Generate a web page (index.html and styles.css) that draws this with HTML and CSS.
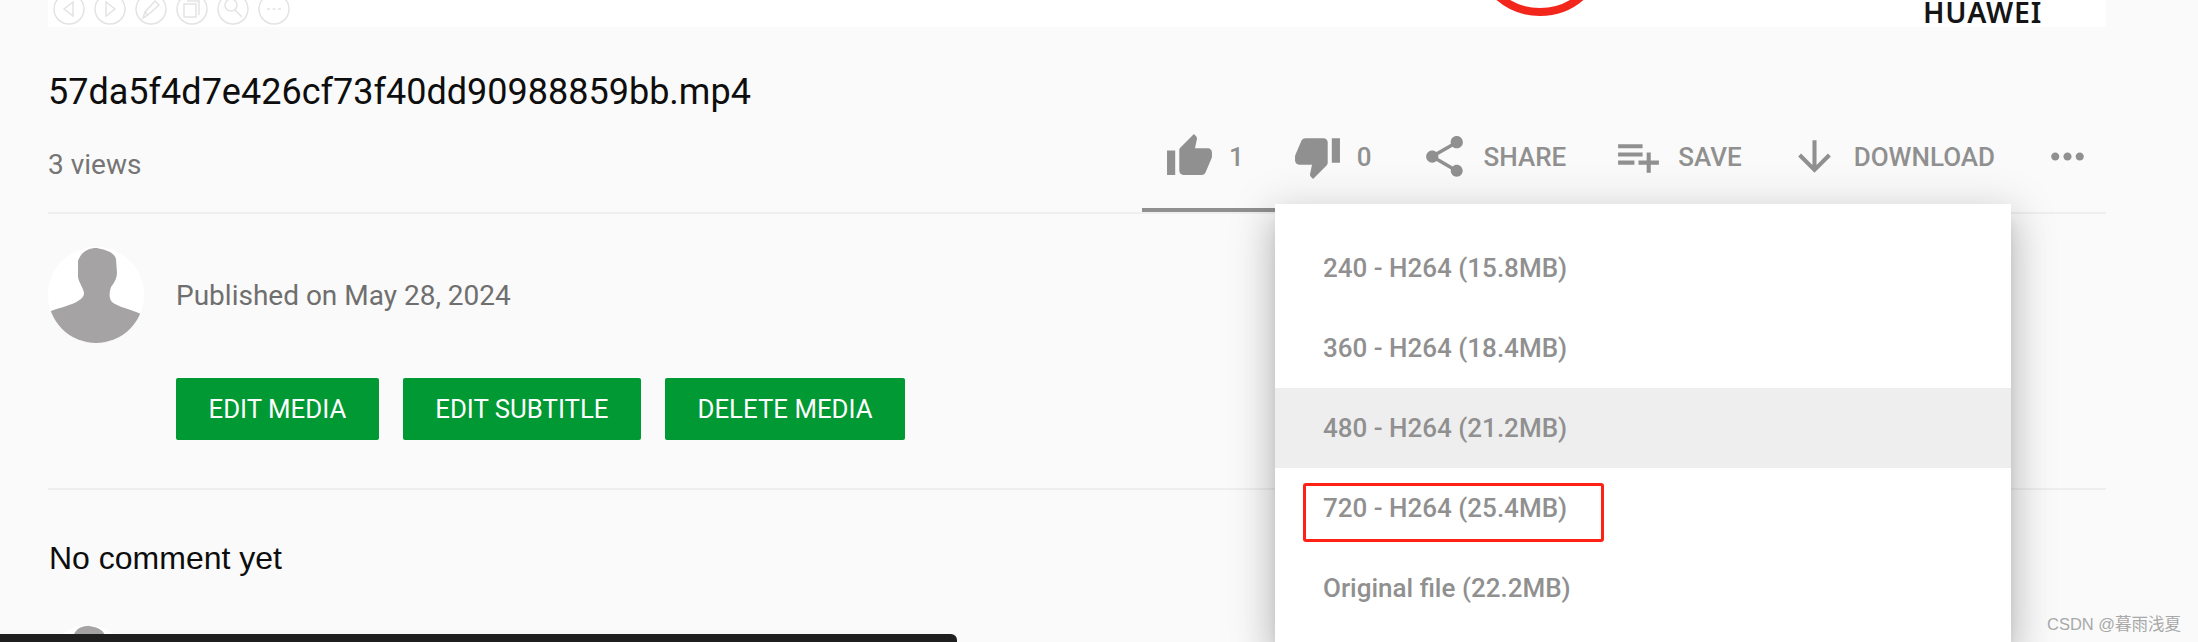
FILE: index.html
```html
<!DOCTYPE html>
<html lang="en">
<head>
<meta charset="utf-8">
<title>57da5f4d7e426cf73f40dd90988859bb.mp4</title>
<link rel="stylesheet" href="styles.css">
</head>
<body>
<main class="page">
  <div class="player-strip">
    <div class="tools">
      <svg class="tool" viewBox="0 0 32 32"><circle cx="16" cy="16" r="15"/><path d="M20 9l-9 7 9 7z"/></svg>
      <svg class="tool" viewBox="0 0 32 32"><circle cx="16" cy="16" r="15"/><path d="M12 9l9 7-9 7z"/></svg>
      <svg class="tool" viewBox="0 0 32 32"><circle cx="16" cy="16" r="15"/><path d="M8 25l2-6L20 8l4 4-11 10zM10 19l3 3"/></svg>
      <svg class="tool" viewBox="0 0 32 32"><circle cx="16" cy="16" r="15"/><path d="M11 8h12v14M8 11h12v13H8z"/></svg>
      <svg class="tool" viewBox="0 0 32 32"><circle cx="16" cy="16" r="15"/><circle cx="14" cy="12" r="6"/><path d="M18 17l7 7"/></svg>
      <svg class="tool" viewBox="0 0 32 32"><circle cx="16" cy="16" r="15"/><path d="M9 16h3M14.500 16h3M20 16h3"/></svg>
    </div>
    <div class="brand-arc"></div>
    <div class="brand-name">HUAWEI</div>
  </div>

  <section class="media-info">
    <h1 class="media-title">57da5f4d7e426cf73f40dd90988859bb.mp4</h1>
    <div class="media-stats">
      <span class="views">3 views</span>
      <div class="actions">
        <div class="rating">
          <button class="action">
            <svg class="icon" viewBox="0 0 24 24"><path d="M1 21h4V9H1v12zm22-11c0-1.100-.9-2-2-2h-6.310l.95-4.570.03-.32c0-.41-.17-.79-.44-1.060L14.170 1 7.590 7.590C7.220 7.950 7 8.450 7 9v10c0 1.100.9 2 2 2h9c.83 0 1.540-.5 1.840-1.220l3.020-7.050c.09-.23.14-.47.14-.73v-2z"/></svg>
            <span>1</span>
          </button>
          <button class="action">
            <svg class="icon" viewBox="0 0 24 24"><path d="M15 3H6c-.83 0-1.540.5-1.840 1.220l-3.020 7.050c-.09.23-.14.47-.14.73v2c0 1.100.9 2 2 2h6.310l-.95 4.570-.03.32c0 .41.17.79.44 1.060L9.830 23l6.590-6.590c.36-.36.58-.86.58-1.410V5c0-1.100-.9-2-2-2zm4 0v12h4V3h-4z"/></svg>
            <span>0</span>
          </button>
        </div>
        <button class="action">
          <svg class="icon" viewBox="0 0 24 24"><path d="M18 16.080c-.76 0-1.440.3-1.960.77L8.910 12.700c.05-.23.09-.46.09-.7s-.04-.47-.09-.7l7.050-4.110c.54.5 1.250.81 2.040.81 1.660 0 3-1.340 3-3s-1.340-3-3-3-3 1.340-3 3c0 .24.04.47.09.7L8.040 9.810C7.500 9.310 6.790 9 6 9c-1.660 0-3 1.340-3 3s1.340 3 3 3c.79 0 1.500-.31 2.040-.81l7.120 4.160c-.05.21-.08.43-.08.65 0 1.610 1.310 2.920 2.920 2.920 1.610 0 2.920-1.310 2.920-2.920s-1.310-2.920-2.920-2.920z"/></svg>
          <span>SHARE</span>
        </button>
        <button class="action">
          <svg class="icon" viewBox="0 0 24 24"><path d="M14 10H2v2h12v-2zm0-4H2v2h12V6zm4 8v-4h-2v4h-4v2h4v4h2v-4h4v-2h-4zM2 16h8v-2H2v2z"/></svg>
          <span>SAVE</span>
        </button>
        <button class="action">
          <svg class="icon" viewBox="0 0 24 24"><path d="M20 12l-1.410-1.410L13 16.170V4h-2v12.170l-5.580-5.590L4 12l8 8 8-8z"/></svg>
          <span>DOWNLOAD</span>
        </button>
        <button class="action">
          <svg class="icon" viewBox="0 0 24 24"><path d="M6 10c-1.100 0-2 .9-2 2s.9 2 2 2 2-.9 2-2-.9-2-2-2zm12 0c-1.100 0-2 .9-2 2s.9 2 2 2 2-.9 2-2-.9-2-2-2zm-6 0c-1.100 0-2 .9-2 2s.9 2 2 2 2-.9 2-2-.9-2-2-2z"/></svg>
        </button>
      </div>
    </div>
  </section>

  <section class="author">
    <div class="author-row">
      <svg class="avatar" viewBox="0 0 96 96"><path d="M49 1C40 1 33 5 30 14V30C31 36 35 40 36 46 36 50 33 52 30 54 24 58 14 60 3 64V96H93V67C82 62 70 60 64 55 61 52 61 46 63 40 67 35 69 30 69 26L68 12C66 5 58 3 49 1Z"/></svg>
      <span class="published">Published on May 28, 2024</span>
    </div>
    <div class="author-buttons">
      <a class="green-btn">EDIT MEDIA</a>
      <a class="green-btn">EDIT SUBTITLE</a>
      <a class="green-btn">DELETE MEDIA</a>
    </div>
  </section>

  <section class="comments">
    <h2 class="comments-title">No comment yet</h2>
    <svg class="comment-avatar" viewBox="0 0 96 96"><path d="M49 1C40 1 33 5 30 14V30C31 36 35 40 36 46 36 50 33 52 30 54 24 58 14 60 3 64V96H93V67C82 62 70 60 64 55 61 52 61 46 63 40 67 35 69 30 69 26L68 12C66 5 58 3 49 1Z"/></svg>
  </section>
</main>

<ul class="download-menu">
  <li class="menu-item">240 - H264 (15.8MB)</li>
  <li class="menu-item">360 - H264 (18.4MB)</li>
  <li class="menu-item is-hover">480 - H264 (21.2MB)</li>
  <li class="menu-item">720 - H264 (25.4MB)</li>
  <li class="menu-item">Original file (22.2MB)</li>
</ul>
<div class="annotation"></div>
<div class="bottom-bar"></div>
<div class="watermark">CSDN @暮雨浅夏</div>
</body>
</html>
```
FILE: styles.css
```css
* { box-sizing: border-box; }
html, body { margin: 0; height: 642px; overflow: hidden; }
body {
  position: relative;
  background: #fafafa;
  font-family: Roboto, "Liberation Sans", sans-serif;
}
.page { padding: 0 92px 0 48px; }

.player-strip {
  position: relative;
  display: flex;
  align-items: flex-start;
  height: 27px;
  background: #fff;
}
.tools { display: flex; gap: 9px; margin: -7px 0 0 5px; }
.tool {
  width: 32px; height: 32px; flex: none;
  fill: none; stroke: #e3e3e3; stroke-width: 1.500;
}
.brand-arc {
  position: absolute; left: 1425px; top: -118px;
  width: 134px; height: 134px;
  border: 8px solid #f3261c; border-radius: 50%;
}
.brand-name {
  position: absolute; left: 1875px; top: 0;
  font: 600 28.500px/25px "Noto Sans", "Liberation Sans", sans-serif;
  letter-spacing: .8px; color: #151515;
}

.media-info { border-bottom: 2px solid #eeeeee; height: 187px; }
.media-title {
  margin: 0; padding-top: 45px;
  font-size: 36px; line-height: 40px; font-weight: 400; color: #0e0e0e;
}
.media-stats { display: flex; justify-content: space-between; height: 100px; padding-top: 20px; }
.views { font-size: 28px; line-height: 30px; padding-top: 18px; color: #757575; }
.actions { display: flex; gap: 48px; padding: 0 14px 0 0; height: 49px; }
.rating { display: flex; gap: 49px; position: relative; }
.rating::after {
  content: ""; position: absolute; left: -23px; right: 0; top: 76px;
  height: 4px; background: #909090;
}
.action {
  display: flex; align-items: center; gap: 15px;
  padding: 0; border: 0; background: none;
  font: 500 26px/30px Roboto, sans-serif; color: #909090;
}
.icon { width: 49px; height: 49px; flex: none; fill: #909090; }

.author { height: 276px; border-bottom: 2px solid #eeeeee; padding-top: 33px; }
.author-row { display: flex; align-items: center; gap: 32px; height: 96px; }
.avatar { width: 96px; height: 96px; border-radius: 50%; background: #fff; fill: #a5a3a4; flex: none; }
.published { font-size: 28px; color: #6f6f6f; }
.author-buttons { display: flex; gap: 24px; margin: 35px 0 0 128px; }
.green-btn {
  display: block; height: 62px; padding: 0 32.500px;
  font-size: 25.800px; line-height: 62px; color: #fff;
  background: #009933; border-radius: 2px;
}

.comments { height: 152px; padding-top: 48px; overflow: hidden; }
.comments-title {
  margin: 0 0 0 1px;
  font: 400 32px/40px "Liberation Sans", Arial, sans-serif; color: #0d0d0d;
}
.comment-avatar { display: block; width: 80px; height: 80px; margin: 47px 0 0; border-radius: 50%; background: #fff; fill: #a5a3a4; }

.download-menu {
  position: absolute; left: 1275px; top: 204px; width: 736px; height: 438px;
  margin: 0; padding: 24px 0; list-style: none; background: #fff;
  overflow: hidden;
  box-shadow: 0 22px 34px 3px rgba(0,0,0,.14), 0 8px 42px 7px rgba(0,0,0,.12), 0 11px 14px -7px rgba(0,0,0,.2);
}
.menu-item {
  height: 80px; padding-left: 48px;
  font-size: 26px; font-weight: 500; line-height: 80px; color: #909090;
}
.is-hover { background: #eeeeee; }

.annotation {
  position: absolute; left: 1303px; top: 483px; width: 301px; height: 59px;
  border: 3px solid #ff2116; border-radius: 3px;
}
.bottom-bar {
  position: absolute; left: 0; top: 634px; width: 957px; height: 8px;
  background: #1e1f1e; border-radius: 0 6px 0 0;
}
.watermark {
  position: absolute; left: 2047px; top: 613px;
  font: 16.500px/22px "Liberation Sans", "Noto Sans CJK SC", sans-serif;
  color: #a8a8a8;
}
```
